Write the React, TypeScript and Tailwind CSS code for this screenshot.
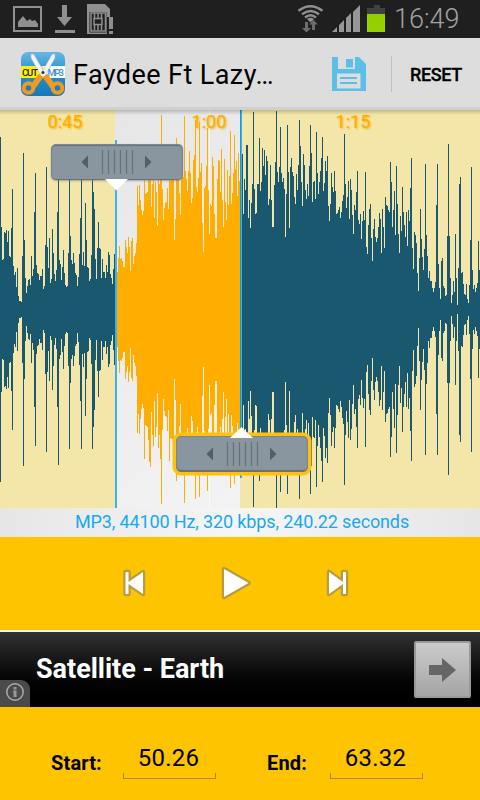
import { clsx } from 'clsx'

// Half height of the wave in pixels, one value per column.
const PEAKS = [
  173, 83, 50, 51, 78, 77, 80, 68, 79, 54, 53, 82, 121, 44, 35, 38, 23, 42, 14, 9,
  9, 8, 54, 157, 70, 32, 17, 24, 30, 31, 25, 54, 34, 41, 98, 137, 45, 37, 36, 30,
  34, 34, 41, 21, 24, 65, 143, 63, 42, 72, 27, 31, 81, 57, 36, 29, 40, 98, 156, 50,
  46, 30, 43, 60, 37, 25, 23, 24, 57, 140, 74, 50, 46, 57, 47, 37, 35, 24, 33, 56,
  92, 140, 45, 58, 44, 107, 70, 43, 42, 29, 31, 55, 140, 118, 101, 51, 31, 62, 88, 62,
  61, 32, 51, 38, 38, 32, 45, 38, 58, 55, 36, 32, 26, 41, 56, 38, 38, 38, 52, 64,
  51, 52, 49, 43, 43, 70, 63, 57, 73, 63, 39, 69, 72, 46, 54, 57, 67, 124, 105, 125,
  110, 100, 95, 99, 150, 116, 117, 118, 131, 153, 158, 103, 126, 137, 92, 128, 118, 84, 139, 126,
  150, 195, 121, 90, 102, 107, 108, 122, 101, 152, 129, 130, 130, 130, 70, 91, 172, 132, 135, 117,
  95, 132, 135, 133, 194, 139, 131, 119, 139, 159, 137, 107, 112, 150, 155, 190, 123, 118, 132, 188,
  138, 147, 87, 58, 122, 124, 144, 182, 120, 76, 106, 104, 153, 144, 96, 72, 72, 131, 150, 149,
  118, 161, 110, 83, 151, 108, 90, 140, 105, 134, 179, 106, 117, 137, 175, 141, 149, 114, 157, 129,
  166, 166, 156, 96, 131, 120, 165, 165, 92, 110, 82, 107, 126, 198, 121, 96, 97, 126, 126, 172,
  119, 128, 162, 144, 160, 135, 154, 149, 105, 111, 145, 110, 83, 83, 125, 148, 199, 138, 128, 143,
  183, 137, 128, 132, 121, 73, 116, 185, 138, 82, 143, 152, 138, 134, 113, 106, 136, 120, 145, 190,
  164, 128, 104, 156, 145, 120, 111, 126, 114, 144, 185, 157, 108, 128, 129, 111, 178, 137, 116, 128,
  139, 152, 173, 119, 127, 149, 139, 154, 104, 89, 106, 137, 123, 118, 139, 119, 96, 97, 100, 103,
  92, 98, 109, 115, 176, 126, 102, 113, 129, 91, 131, 120, 95, 76, 105, 100, 118, 139, 90, 86,
  96, 71, 89, 99, 90, 138, 63, 56, 85, 101, 106, 72, 49, 81, 91, 73, 68, 72, 83, 97,
  91, 57, 101, 83, 62, 113, 105, 104, 100, 98, 148, 128, 83, 100, 119, 75, 144, 106, 76, 57,
  94, 79, 123, 98, 85, 73, 98, 64, 100, 89, 122, 152, 62, 41, 78, 75, 67, 37, 19, 52,
  101, 71, 53, 40, 61, 146, 75, 54, 32, 39, 29, 29, 22, 18, 22, 28, 105, 146, 46, 22,
  11, 49, 52, 24, 22, 14, 15, 74, 166, 74, 32, 7, 15, 29, 18, 76, 32, 5, 42, 126,
  133, 37, 38, 26, 16, 15, 26, 11, 7, 25, 70, 143, 40, 21, 25, 18, 22, 27, 69, 40,
]

const SELECTION_START = 116
const SELECTION_END = 241
const CENTER = 200

const columnsPath = (from: number, to: number) =>
  PEAKS.slice(from, to)
    .map((peak, i) => `M${from + i} ${CENTER - peak}h1v${peak * 2 - 1}h-1z`)
    .join('')

const TIMES = ['0:45', '1:00', '1:15']

const StatusBar = () => (
  <header className="flex h-[38px] shrink-0 bg-[#1f1f1f]">
    <svg width="390" height="38" className="shrink-0">
      <g fill="#8f8f8f">
        <path
          fillRule="evenodd"
          d="M13 6h29v26H13zM15 8v22h25V8z"
        />
        <path d="M18 27v-5l5-6 4 5 3-2 2 2 3-1 3 4v3z" />
        <path d="M62 5h5v12h5l-7.500 9-7.500-9h5zM55 30h20v3H55z" />
        <path
          fillRule="evenodd"
          d="M87 4h18l5 5v8h-3v17H87zM89.500 12v20.500h17V12z"
        />
        <path d="M109 17h4v12h-4zM109 31h4v3h-4z" />
      </g>
      <g fill="none" stroke="#8f8f8f" strokeWidth="1.500">
        <rect x="91" y="13" width="14.500" height="18" />
        <rect x="94" y="18.500" width="8" height="6" />
        <path d="M94.500 13v5M98 13v5M101.500 13v5M94.500 25v5M98 25v5M101.500 25v5" />
      </g>
      <g fill="none" stroke="#8f8f8f" strokeWidth="2.400">
        <path d="M298.500 10.800Q310.500 1.500 322.500 10.800" />
        <path d="M302 14.300Q310.500 7.500 319 14.300" />
        <path d="M305 17.500Q310.500 13 316 17.500" />
      </g>
      <path fill="#8f8f8f" d="M307 19q3.500-2.500 7 0l-3.500 3.500z" />
      <path
        fill="#6c6c6c"
        d="M305 22h3v6h3l-4.500 4.500-4.500-4.500h3zM312 30v-5.500h-3l4.500-4.500 4.500 4.500h-3V30z"
      />
      <path
        fill="#979797"
        d="M332 32l5-5v5zM339 32v-7l5-5v12zM346 32V18l5-5v19zM353 32V12l7-7v27z"
      />
      <path fill="#414141" d="M374 5h6v3h5v6h-18V8h7z" />
      <path fill="#92d000" d="M367 14h18v18h-18z" />
    </svg>
    <span className="ml-[4px] w-[72px] pt-[3px] text-[27px] font-light leading-[32px] tracking-[0px] text-[#a2a2a2]">
      16:49
    </span>
  </header>
)

const AppIcon = () => (
  <svg width="44" height="44" viewBox="0 0 44 44" className="shrink-0 overflow-visible">
    <defs>
      <linearGradient id="sky" x1="0" y1="0" x2="0" y2="1">
        <stop offset="0" stopColor="#67b7e5" />
        <stop offset="0.5" stopColor="#268dcc" />
        <stop offset="1" stopColor="#1579b9" />
      </linearGradient>
    </defs>
    <rect width="44" height="44" rx="7" fill="url(#sky)" />
    <path fill="#fff200" d="M0 14h22v12H0z" />
    <path fill="#fff" d="M22 14h22v12H22z" />
    <path fill="#f2f4f5" stroke="#9fb4c0" strokeWidth="0.500" d="M10 2q3-1 5 4l10 17-4 3L10 6z" />
    <path fill="#f2f4f5" stroke="#9fb4c0" strokeWidth="0.500" d="M34 2q-3-1-5 4L19 23l4 3L34 6z" />
    <g fontFamily="Roboto, sans-serif" fontWeight="500" fontSize="9.500">
      <text x="1" y="23.500" fill="#222" textLength="16">
        CUT
      </text>
      <text x="26.500" y="23.500" fill="#3c94cf" textLength="16.500">
        MP3
      </text>
    </g>
    <g fill="none" stroke="#f29a1f">
      <circle cx="7.500" cy="36" r="4.800" strokeWidth="4" />
      <circle cx="36.500" cy="36" r="4.800" strokeWidth="4" />
      <path strokeWidth="6" d="M20 23.500L12 34.500M24 23.500L32 34.500" />
    </g>
    <circle cx="22" cy="20.500" r="1.500" fill="#333" />
  </svg>
)

const ActionBar = () => (
  <div className="flex h-[72px] shrink-0 items-center border-b-[3px] border-[#d0d0d0] bg-[#ddd] pl-[21px] pt-[2px]">
    <AppIcon />
    <h1 className="ml-2 w-[259px] whitespace-nowrap pt-0.5 text-[27px] leading-8 tracking-[0.42px] text-black">
      Faydee Ft Lazy…
    </h1>
    <svg width="34" height="34" className="shrink-0">
      <path
        fill="#5bc0e8"
        fillRule="evenodd"
        d="M0 0h6v12h17V0h4l7 7v27H0zM5 16.500v15h23.500v-15z"
      />
      <path fill="#5bc0e8" d="M14 2h7v8.500h-7zM8 20h17v2H8zM8 25h17v2H8z" />
    </svg>
    <div className="ml-[25px] h-9 w-px bg-[#c0c0c0]" />
    <button className="ml-[18px] pt-[2px] text-[18px] font-medium leading-6 tracking-[-0.4px] text-black [-webkit-text-stroke:0.3px_black]">
      RESET
    </button>
  </div>
)

type HandleProps = {
  isActive?: boolean
  className?: string
}

const Handle = ({ isActive, className }: HandleProps) => (
  <div
    className={clsx(
      'absolute flex h-[36px] w-[132px] items-center justify-center rounded-[5px] border border-[#7b868e] border-b-[#697279] bg-[#8a969f]',
      isActive
        ? 'shadow-[0_0_0_3.500px_#ffc010,inset_0_-1px_1px_#646e75]'
        : 'shadow-[0_1px_2px_#7779,inset_0_1px_1px_#66717a]',
      className,
    )}
  >
    <svg width="130" height="34" className="overflow-visible">
      <path
        fill="#fff"
        d={isActive ? 'M53 1L64.500-10 76 1z' : 'M53 34L64.500 45.500 76 34z'}
      />
      <path fill="#535e66" d="M29.500 17l6.500-6.500v13zM99.500 17l-6.500-6.500v13z" />
      <path
        stroke="#66717a"
        strokeWidth="1.200"
        d="M50.500 5v24M56.500 5v24M62.500 5v24M68.500 5v24M74.500 5v24M80.500 5v24"
      />
    </svg>
  </div>
)

const Waveform = () => (
  <div className="relative h-[398px] shrink-0 overflow-hidden bg-linear-to-br from-[#e4e4e4] to-[#f8f8f8]">
    <svg width="480" height="398" shapeRendering="crispEdges" className="block">
      <path fill="#f4e6a8" d="M0 0h115v398H0zM240 0h240v398H240z" />
      <path fill="#fff" opacity="0.6" d="M209 0h1v398h-1z" />
      <path fill="#1a5870" d={columnsPath(0, SELECTION_START)} />
      <path fill="#ffae00" d={columnsPath(SELECTION_START, SELECTION_END)} />
      <path fill="#1a5870" d={columnsPath(SELECTION_END, PEAKS.length)} />
      <path fill="#37b4e8" d="M115 30h2v368h-2z" />
      <path fill="#0d9ae6" d="M240 0h1v368h-1z" />
      <path fill="#37b4e8" d="M241 0h1v368h-1z" />
    </svg>
    <div className="absolute inset-x-0 top-0 h-[5px] bg-linear-to-b from-black/20 to-transparent" />
    <div className="absolute left-[-7px] top-0 flex">
      {TIMES.map((time) => (
        <span
          key={time}
          className="w-[144px] pt-px text-center text-[18px] leading-[22px] tracking-[0.1px] text-[#ffae00] [text-shadow:1px_1px_2px_#ffae00]"
        >
          {time}
        </span>
      ))}
    </div>
    <Handle className="left-[51px] top-[34px]" />
    <Handle isActive className="left-[176px] top-[326px]" />
  </div>
)

const ICON_PATHS = {
  previous: 'M8.500 6h3v10L26 6v22L11.500 18v10h-3z',
  play: 'M5 3L29.500 17 5 31z',
  next: 'M25 6h-3v10L8 6v22l14-10v10h3z',
}

const PlayerButton = ({ icon }: { icon: keyof typeof ICON_PATHS }) => (
  <button aria-label={icon}>
    <svg width="34" height="34">
      <path
        d={ICON_PATHS[icon]}
        fill="#fff"
        stroke="#b99c3b"
        strokeWidth="4.500"
        strokeLinejoin="round"
        paintOrder="stroke"
      />
    </svg>
  </button>
)

const AdBanner = () => (
  <div className="relative flex h-[77px] shrink-0 items-center border-t-2 border-[#e8f7ef] bg-linear-to-b from-[#333] to-black pl-9">
    <span className="w-[378px] pb-px text-[27px] font-bold leading-8 tracking-[-0.02px] text-white">
      Satellite - Earth
    </span>
    <div className="flex size-[57px] items-center justify-center rounded-xs border-2 border-[#999] bg-linear-to-b from-[#cbcbcb] to-[#a5a5a5]">
      <svg width="27" height="24">
        <path fill="#666" d="M0 7h13V0l14 12-14 12v-7H0z" />
      </svg>
    </div>
    <div className="absolute bottom-0 left-0 flex h-[27px] w-[30px] items-start justify-center rounded-tr-[9px] bg-[#4a4a4a] pt-[3px]">
      <svg width="18" height="18">
        <circle cx="9" cy="9" r="8.200" fill="none" stroke="#aaa" strokeWidth="1.500" />
        <path fill="#999" d="M7.500 4h3v2.500h-3zM7 7.500h3.500V14H7.500V8.500H7z" />
      </svg>
    </div>
  </div>
)

type TimeFieldProps = {
  label: string
  value: string
  className?: string
}

const TimeField = ({ label, value, className }: TimeFieldProps) => (
  <div className={clsx('flex', className)}>
    <span className="shrink-0 pt-[8px] text-[20px] font-bold leading-6 tracking-[0.15px]">
      {label}
    </span>
    <div className="ml-auto w-[93px]">
      <div className="pr-[2px] text-center text-[24px] leading-[30px] tracking-[0.2px]">
        {value}
      </div>
      <div className="h-[6px] border border-t-0 border-[#b08a0c]" />
    </div>
  </div>
)

export default function App() {
  return (
    <main className="flex h-[800px] w-[480px] flex-col overflow-hidden bg-[#ffc400] font-[Roboto,sans-serif] text-black">
      <StatusBar />
      <ActionBar />
      <Waveform />
      <p className="h-[29px] shrink-0 bg-linear-to-r from-[#e6e6e6] via-[#f6f6f6] to-[#e6e6e6] pl-[4px] text-center text-[18px] leading-[28px] tracking-[-0.13px] text-[#16aaf5]">
        MP3, 44100 Hz, 320 kbps, 240.22 seconds
      </p>
      <div className="flex h-[93px] shrink-0 items-center justify-center gap-[68px] pb-[2px] pr-[9px]">
        <PlayerButton icon="previous" />
        <PlayerButton icon="play" />
        <PlayerButton icon="next" />
      </div>
      <AdBanner />
      <div className="flex pt-9">
        <TimeField label="Start:" value="50.26" className="ml-[51px] w-[165px]" />
        <TimeField label="End:" value="63.32" className="ml-[51px] w-[156px]" />
      </div>
    </main>
  )
}
